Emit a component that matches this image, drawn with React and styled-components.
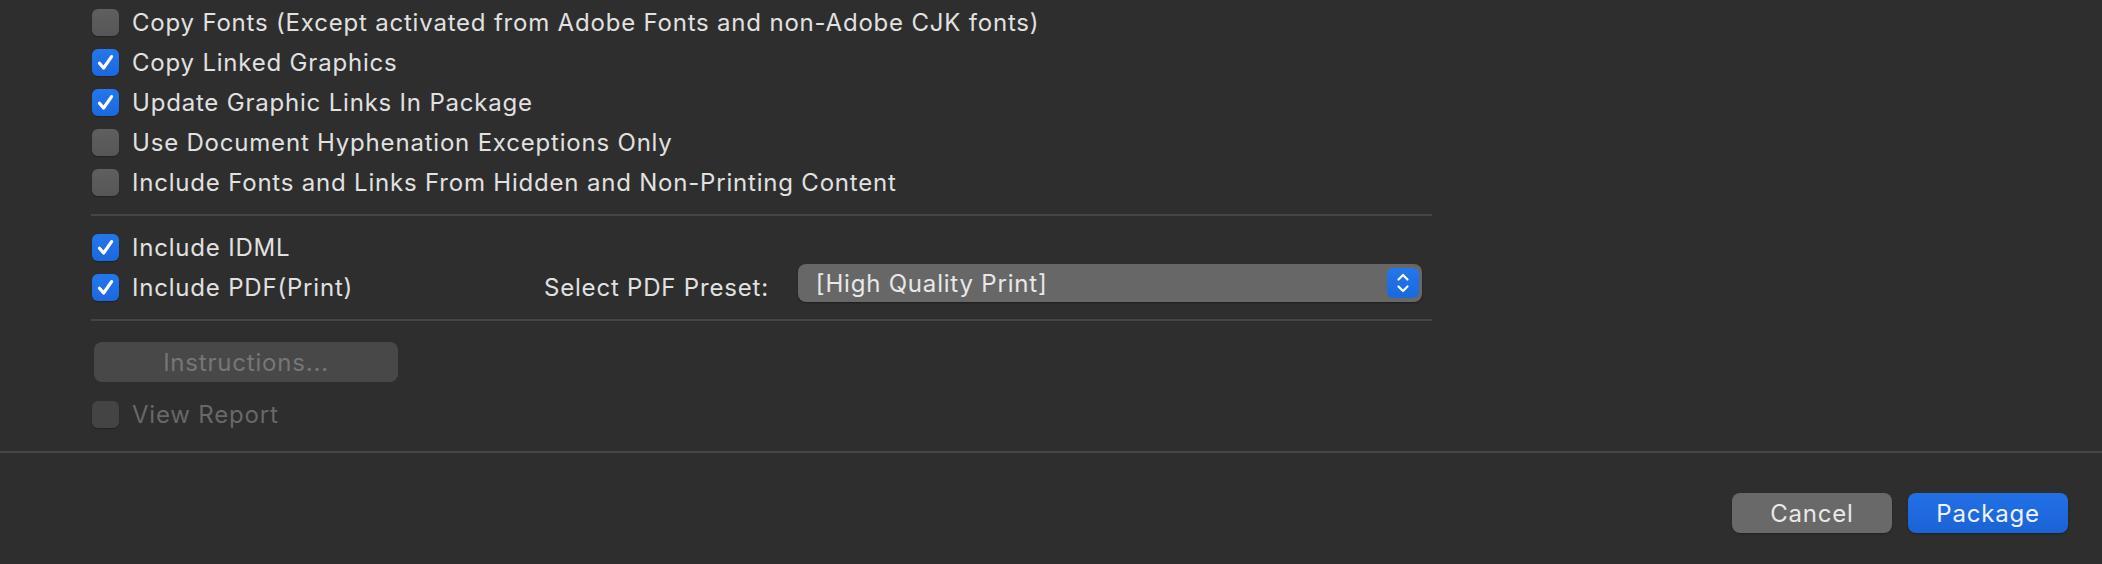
import React from 'react'
import styled, {createGlobalStyle} from 'styled-components'

const GlobalStyle = createGlobalStyle`
  html, body {
    margin: 0;
    padding: 0;
    background: #2e2e2e;
  }
  body {
    font-family: Inter, "Liberation Sans", Arial, sans-serif;
    letter-spacing: 0.8px;
    -webkit-font-smoothing: antialiased;
  }
`

const options = [
  {id: 'fonts', label: 'Copy Fonts (Except activated from Adobe Fonts and non-Adobe CJK fonts)', checked: false},
  {id: 'graphics', label: 'Copy Linked Graphics', checked: true},
  {id: 'links', label: 'Update Graphic Links In Package', checked: true},
  {id: 'hyphen', label: 'Use Document Hyphenation Exceptions Only', checked: false},
  {id: 'hidden', label: 'Include Fonts and Links From Hidden and Non-Printing Content', checked: false},
]

const CheckBox = ({checked, disabled}) => (
  <Box $checked={checked} $disabled={disabled}>
    {checked && (
      <svg width="27" height="27" viewBox="0 0 27 27">
        <path
          d="M7.5 14.2 L11.6 19 L19.6 7.6"
          fill="none"
          stroke="#fff"
          strokeWidth="3.2"
          strokeLinecap="round"
          strokeLinejoin="round"
        />
      </svg>
    )}
  </Box>
)

const Option = ({label, checked, disabled}) => (
  <Row>
    <CheckBox checked={checked} disabled={disabled} />
    <Label $disabled={disabled}>{label}</Label>
  </Row>
)

const App = () => (
  <>
    <GlobalStyle />
    <Dialog>
      <Options>
        {options.map(each => (
          <Option key={each.id} label={each.label} checked={each.checked} />
        ))}
        <Divider $top={12} $bottom={11} />
        <Option label="Include IDML" checked />
        <Row>
          <LeftGroup>
            <CheckBox checked />
            <Label>Include PDF(Print)</Label>
          </LeftGroup>
          <PresetLabel>Select PDF Preset:</PresetLabel>
          <Select>
            <SelectText>[High Quality Print]</SelectText>
            <Stepper>
              <svg width="32" height="30" viewBox="0 0 32 30">
                <path
                  d="M11.5 11.5 L16 7 L20.5 11.5 M11.5 18.5 L16 23 L20.5 18.5"
                  fill="none"
                  stroke="#fff"
                  strokeWidth="2.2"
                  strokeLinecap="round"
                  strokeLinejoin="round"
                />
              </svg>
            </Stepper>
          </Select>
        </Row>
        <Divider $top={12} $bottom={21} />
        <InstructionsButton disabled>Instructions...</InstructionsButton>
        <ReportRow>
          <Option label="View Report" disabled />
        </ReportRow>
      </Options>
      <Footer>
        <Button>Cancel</Button>
        <Button $primary>Package</Button>
      </Footer>
    </Dialog>
  </>
)

export default App

const Dialog = styled.div`
  height: 564px;
  background: #2e2e2e;
  display: flex;
  flex-direction: column;
  overflow: hidden;
`

const Options = styled.section`
  width: 1341px;
  padding: 2px 0 0 91px;
  display: flex;
  flex-direction: column;
`

const Row = styled.div`
  height: 40px;
  display: flex;
  align-items: center;
  padding-left: 1px;
`

const LeftGroup = styled.div`
  width: 452px;
  display: flex;
  align-items: center;
`

const Box = styled.span`
  width: 27px;
  height: 27px;
  flex: none;
  box-sizing: border-box;
  border-radius: 6px;
  display: flex;
  align-items: center;
  justify-content: center;
  background: ${p =>
    p.$checked
      ? 'linear-gradient(#2477ec, #1c68dd)'
      : p.$disabled
      ? '#444444'
      : 'linear-gradient(#5f5f5f, #565656)'};
  box-shadow: 0 1px 1px rgba(0, 0, 0, 0.25);
  margin-right: 13px;
`

const Label = styled.span`
  font-size: 24px;
  color: ${p => (p.$disabled ? '#686868' : '#e1e1e1')};
  white-space: nowrap;
`

const Divider = styled.hr`
  border: 0;
  height: 2px;
  background: #454545;
  margin: ${p => p.$top}px 0 ${p => p.$bottom}px 0;
`

const PresetLabel = styled.span`
  font-size: 24px;
  color: #e1e1e1;
  white-space: nowrap;
  margin-right: 29px;
`

const Select = styled.div`
  width: 624px;
  height: 38px;
  box-sizing: border-box;
  margin-bottom: 8px;
  border-radius: 8px;
  background: #676767;
  box-shadow: 0 1px 2px rgba(0, 0, 0, 0.35);
  display: flex;
  align-items: center;
  justify-content: space-between;
  padding: 0 3px 0 18px;
`

const SelectText = styled.span`
  font-size: 24px;
  color: #e8e8e8;
`

const Stepper = styled.span`
  width: 32px;
  height: 30px;
  border-radius: 6px;
  background: linear-gradient(#2477ec, #1c68dd);
  display: flex;
`

const InstructionsButton = styled.button`
  width: 304px;
  height: 40px;
  margin-left: 3px;
  border: 0;
  border-radius: 8px;
  background: #484848;
  color: #767676;
  font-family: inherit;
  letter-spacing: inherit;
  font-size: 24px;
  padding: 0;
`

const ReportRow = styled.div`
  margin-top: 12px;
`

const Footer = styled.footer`
  margin-top: 17px;
  border-top: 2px solid #454545;
  padding: 40px 34px 0 0;
  display: flex;
  justify-content: flex-end;
  gap: 16px;
`

const Button = styled.button`
  width: 160px;
  height: 40px;
  border: 0;
  border-radius: 8px;
  font-family: inherit;
  letter-spacing: inherit;
  font-size: 24px;
  padding: 0;
  color: ${p => (p.$primary ? '#eef3ff' : '#e8e8e8')};
  background: ${p => (p.$primary ? 'linear-gradient(#2370e6, #1a63d6)' : '#696969')};
  box-shadow: 0 1px 2px rgba(0, 0, 0, 0.3);
`
